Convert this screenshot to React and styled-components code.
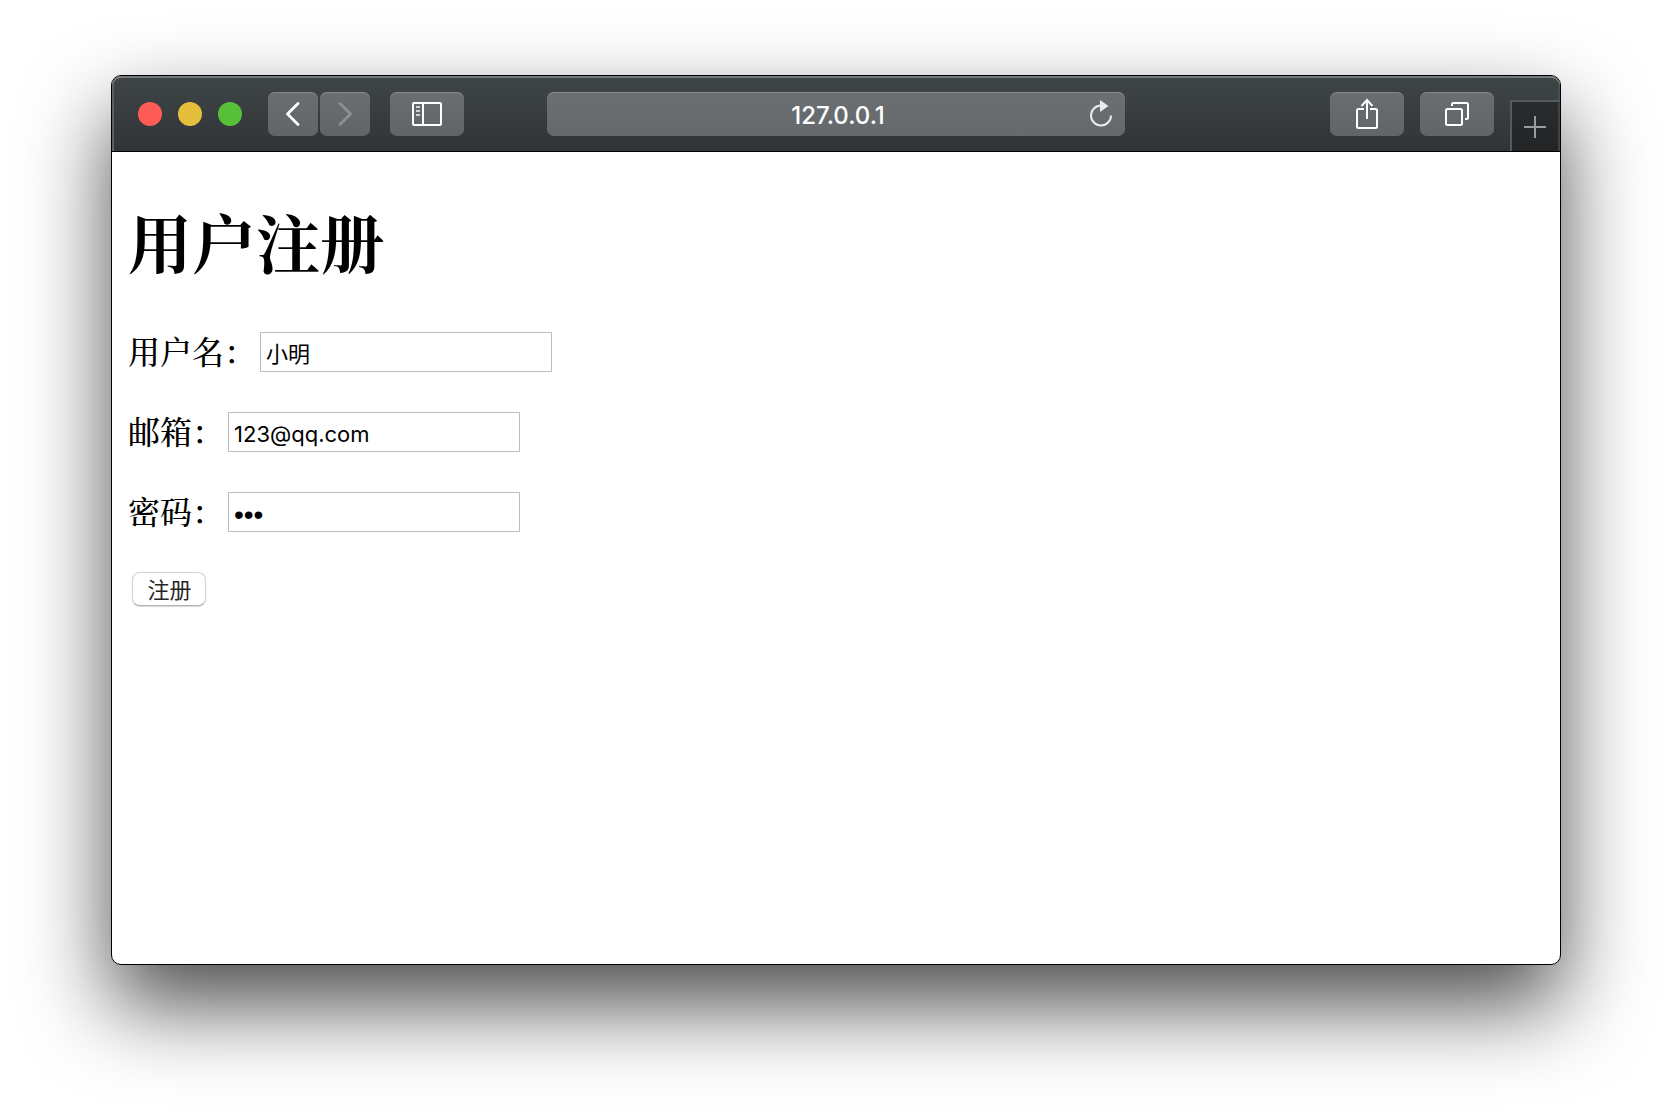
import React from "react";
import styled, { createGlobalStyle } from "styled-components";

const GlobalStyle = createGlobalStyle`
  *, *::before, *::after { box-sizing: border-box; }
  html, body { margin: 0; background: #fff; }
`;

const uiFont = `Inter, "Noto Sans CJK SC", sans-serif`;
const pageFont = `"Songti SC", "Noto Serif CJK SC", "Liberation Serif", "Noto Sans CJK SC", serif`;

const Desktop = styled.div`
  display: flex;
  min-height: 100vh;
  padding: 75px 111px 147px;
`;

const Window = styled.section`
  display: flex;
  flex: 1;
  flex-direction: column;
  min-width: 0;
  border: 1px solid #000;
  border-radius: 10px;
  background: #fff;
  box-shadow: 0 40px 86px rgba(0, 0, 0, 0.7);
`;

const Toolbar = styled.header`
  display: grid;
  grid-template-columns: 1fr minmax(0, 578px) 1fr;
  height: 76px;
  border-bottom: 1px solid #000;
  border-radius: 9px 9px 0 0;
  background: linear-gradient(#3f4547, #313437);
  box-shadow: inset 0 2px #75797b, inset 2px 0 #5b5f61, inset -2px 0 #4a4e50;
`;

const ToolGroup = styled.div`
  display: flex;
  align-items: flex-start;
  justify-content: ${(p) => (p.$end ? "flex-end" : "flex-start")};
  gap: ${(p) => p.$gap}px;
  padding-top: ${(p) => (p.$inset ? 16 : 0)}px;
`;

const LeftTools = styled(ToolGroup)`
  padding-left: 26px;
`;

const Lights = styled.div`
  display: flex;
  align-items: center;
  gap: 16px;
  height: 44px;
  margin-right: 26px;
`;

const Light = styled.button`
  width: 24px;
  height: 24px;
  padding: 0;
  border: 0;
  border-radius: 50%;
  background: ${(p) => p.$color};
`;

const ToolButton = styled.button`
  display: flex;
  align-items: center;
  justify-content: center;
  width: ${(p) => (p.$narrow ? 50 : 74)}px;
  height: 44px;
  padding: 0;
  border: 0;
  border-radius: 7px;
  background: linear-gradient(#6a6e70, #616568);
  box-shadow: inset 0 1px #84888a;
  color: ${(p) => (p.disabled ? "#8e9193" : "#fff")};
`;

const NavPair = styled.div`
  display: flex;
  gap: 2px;
  margin-right: 20px;
`;

const AddressBar = styled.div`
  display: grid;
  grid-template-columns: 32px 1fr 32px;
  align-items: center;
  height: 44px;
  margin-top: 16px;
  padding: 0 8px;
  border-radius: 7px;
  background: linear-gradient(#6b6f71, #65696b);
  box-shadow: inset 0 1px #898c8e;
`;

const AddressInput = styled.input`
  grid-column: 2;
  width: 100%;
  height: 44px;
  padding: 2px 0 0 4px;
  border: 0;
  outline: 0;
  background: transparent;
  color: #fff;
  font: 500 24px/32px ${uiFont};
  text-align: center;
`;

const ReloadButton = styled.button`
  display: flex;
  justify-content: center;
  padding: 0 0 2px;
  border: 0;
  background: transparent;
  color: #ebebeb;
`;

const NewTabButton = styled.button`
  display: flex;
  align-items: center;
  justify-content: center;
  width: 50px;
  height: 51px;
  margin-top: 24px;
  padding: 0 2px 0 0;
  border: solid #565a5c;
  border-width: 2px 0 0 2px;
  background: linear-gradient(#292c2e, #222425);
  box-shadow: inset -2px 0 #414446;
  color: #9b9c9d;
`;

const Page = styled.main`
  padding: 42px 16px;
  color: #000;
`;

const Title = styled.h1`
  margin: 0 0 46px;
  font: 700 64px/92px ${pageFont};
`;

const Form = styled.form`
  display: flex;
  flex-direction: column;
  align-items: flex-start;
  gap: 40px;
`;

const Field = styled.div`
  display: flex;
  align-items: flex-start;
  gap: 4px;
  height: 40px;
`;

const Label = styled.label`
  font: 500 32px/36px ${pageFont};
  white-space: nowrap;
`;

const TextInput = styled.input`
  width: 292px;
  height: 40px;
  padding: 4px 5px 0;
  border: 1px solid #bdbdbd;
  border-radius: 0;
  outline: 0;
  background: #fff;
  color: #000;
  font: 400 22px/32px ${uiFont};

  &:lang(zh) {
    padding-top: 0;
  }

  &[type="password"] {
    padding-top: 6px;
    font: 400 28px/32px "Liberation Sans", sans-serif;
  }
`;

const SubmitButton = styled.button`
  width: 74px;
  height: 34px;
  margin-left: 4px;
  padding: 2px 0 0 1px;
  border: 1px solid #d2d2d2;
  border-bottom-color: #b4b4b4;
  border-radius: 8px;
  background: #fff;
  box-shadow: 0 1px 1px rgba(0, 0, 0, 0.16);
  color: #262626;
  font: 400 22px/30px ${uiFont};
`;

const lights = [
  { name: "关闭", color: "#ff5c57" },
  { name: "最小化", color: "#e5bf3c" },
  { name: "缩放", color: "#58c038" },
];

const fields = [
  { id: "username", label: "用户名：", type: "text", lang: "zh", value: "小明" },
  { id: "email", label: "邮箱：", type: "text", lang: "en", value: "123@qq.com" },
  { id: "password", label: "密码：", type: "password", lang: "en", value: "123" },
];

function Glyph({ width, height, stroke = 2, children }) {
  return (
    <svg
      width={width}
      height={height}
      viewBox={`0 0 ${width} ${height}`}
      fill="none"
      stroke="currentColor"
      strokeWidth={stroke}
      aria-hidden="true"
    >
      {children}
    </svg>
  );
}

const BackIcon = () => (
  <Glyph width={16} height={24} stroke={2.8}>
    <path d="M13 1.500 2.500 12 13 22.500" strokeLinecap="round" strokeLinejoin="round" />
  </Glyph>
);

const ForwardIcon = () => (
  <Glyph width={16} height={24} stroke={2.8}>
    <path d="M3 1.500 13.500 12 3 22.500" strokeLinecap="round" strokeLinejoin="round" />
  </Glyph>
);

const SidebarIcon = () => (
  <Glyph width={30} height={24}>
    <rect x="1" y="1" width="28" height="22" rx="1" />
    <path d="M11 1v22" />
    <path d="M4 5h4M4 9h4M4 13h4" opacity="0.7" />
  </Glyph>
);

const ReloadIcon = () => (
  <Glyph width={24} height={28}>
    <path d="M12 6.500A10 10 0 1 0 22 16.500" />
    <path d="M11 1v12l8.500-6z" fill="currentColor" stroke="none" />
  </Glyph>
);

const ShareIcon = () => (
  <Glyph width={22} height={32}>
    <path d="M8 11H2.500A1.500 1.500 0 0 0 1 12.500v16A1.500 1.500 0 0 0 2.500 30h17a1.500 1.500 0 0 0 1.500-1.500v-16a1.500 1.500 0 0 0-1.500-1.500H14" />
    <path d="M11 21V2M5.500 8 11 2l5.500 6" />
  </Glyph>
);

const TabsIcon = () => (
  <Glyph width={24} height={24}>
    <rect x="1" y="7" width="16" height="16" rx="1.500" />
    <path d="M7 4V2.500A1.500 1.500 0 0 1 8.500 1h13A1.500 1.500 0 0 1 23 2.500v13a1.500 1.500 0 0 1-1.500 1.500H20" />
  </Glyph>
);

const PlusIcon = () => (
  <Glyph width={22} height={22}>
    <path d="M11 0v22M0 11h22" />
  </Glyph>
);

export default function App() {
  return (
    <>
      <GlobalStyle />
      <Desktop>
        <Window>
          <Toolbar>
            <LeftTools $gap={0} $inset>
              <Lights>
                {lights.map((light) => (
                  <Light key={light.name} type="button" aria-label={light.name} $color={light.color} />
                ))}
              </Lights>
              <NavPair>
                <ToolButton type="button" aria-label="后退" $narrow><BackIcon /></ToolButton>
                <ToolButton type="button" aria-label="前进" $narrow disabled><ForwardIcon /></ToolButton>
              </NavPair>
              <ToolButton type="button" aria-label="边栏"><SidebarIcon /></ToolButton>
            </LeftTools>
            <AddressBar>
              <AddressInput aria-label="地址" defaultValue="127.0.0.1" />
              <ReloadButton type="button" aria-label="重新载入"><ReloadIcon /></ReloadButton>
            </AddressBar>
            <ToolGroup $gap={16} $end>
              <ToolGroup $gap={16} $inset>
                <ToolButton type="button" aria-label="共享"><ShareIcon /></ToolButton>
                <ToolButton type="button" aria-label="标签页"><TabsIcon /></ToolButton>
              </ToolGroup>
              <NewTabButton type="button" aria-label="新标签页"><PlusIcon /></NewTabButton>
            </ToolGroup>
          </Toolbar>
          <Page lang="zh-CN">
            <Title>用户注册</Title>
            <Form onSubmit={(event) => event.preventDefault()}>
              {fields.map((field) => (
                <Field key={field.id}>
                  <Label htmlFor={field.id}>{field.label}</Label>
                  <TextInput
                    id={field.id}
                    name={field.id}
                    type={field.type}
                    lang={field.lang}
                    defaultValue={field.value}
                  />
                </Field>
              ))}
              <SubmitButton type="submit">注册</SubmitButton>
            </Form>
          </Page>
        </Window>
      </Desktop>
    </>
  );
}
